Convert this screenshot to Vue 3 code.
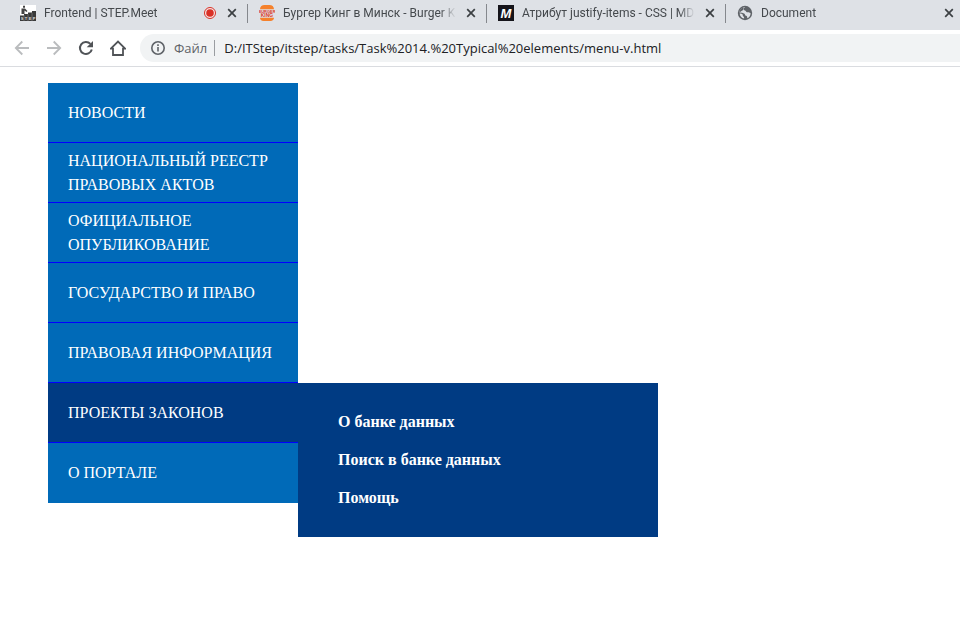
<script setup>
import { ref } from 'vue'

const tabs = [
  { id: 'step', title: 'Frontend | STEP.Meet', recording: true },
  { id: 'burger', title: 'Бургер Кинг в Минск - Burger King' },
  { id: 'mdn', title: 'Атрибут justify-items - CSS | MDN' },
  { id: 'doc', title: 'Document' },
]

const address = ref('D:/ITStep/itstep/tasks/Task%2014.%20Typical%20elements/menu-v.html')

const menu = [
  { title: 'Новости' },
  { title: 'Национальный реестр правовых актов' },
  { title: 'Официальное опубликование' },
  { title: 'Государство и право' },
  { title: 'Правовая информация' },
  { title: 'Проекты законов', children: ['О банке данных', 'Поиск в банке данных', 'Помощь'] },
  { title: 'О портале' },
]

const opened = ref(5)
</script>

<template>
  <div class="window">
    <header class="browser">
      <div class="tabs">
        <div v-for="tab in tabs" :key="tab.id" class="tab">
          <svg v-if="tab.id === 'step'" class="icon" viewBox="0 0 16 16" aria-hidden="true">
            <rect width="16" height="16" fill="#fff" />
            <path d="M0 10.500h4V9h4V7.500h4V6h4v10H0z" fill="#3a3a3a" />
            <path d="M3 .8h2v2H3zM1.500 3.500h3.500L7.500 6l-1 1-2-1.500V9h-3z" fill="#444" />
            <path d="M4 10v6M8 9v7M12 8v8" stroke="#999" stroke-width=".5" />
            <g class="logo-text step-text"><text x="2" y="14.500">S</text><text x="6" y="14.500">T</text><text x="10" y="14.500">E</text><text x="14" y="14.500">P</text></g>
          </svg>
          <svg v-else-if="tab.id === 'burger'" class="icon" viewBox="0 0 16 16" aria-hidden="true">
            <path d="M1 4.200C1 1.500 3 0 5.500 0h5C13 0 15 1.500 15 4.200zM1 12.800h14c0 2-1.300 3.200-3.500 3.200h-7C2.300 16 1 14.800 1 12.800z" fill="#f5812c" />
            <g class="logo-text king-text">
              <text class="king-top" x="8" y="7.900">BURGER</text>
              <text x="8" y="12.300">KING</text>
            </g>
          </svg>
          <svg v-else-if="tab.id === 'mdn'" class="icon" viewBox="0 0 16 16" aria-hidden="true">
            <rect width="16" height="16" fill="#15141a" />
            <text class="logo-text mdn-text" x="8" y="12.500">M</text>
          </svg>
          <svg v-else class="icon" viewBox="0 0 16 16" aria-hidden="true">
            <circle cx="8" cy="8" r="7.200" fill="#5f6368" />
            <path d="M8.200 2.200C7 3 6.500 3.200 6.500 4.300c0 1.200 1.700.7 2.200 1.700.4.900 1.300 1.400 2.300 1.200 1-.2 1.300.8 2.600.7a5.700 5.700 0 0 1-3.400 5.300c.2-1-.1-2.200-1.100-2.400-1.400-.3-.8-1.800-2-2.300C5.600 7.800 4 7.500 2.300 7.600 2.500 4.600 5 2.100 8.200 2.200z" fill="#dee1e6" />
            <path d="M2.600 8.600c1.200 0 2.600.2 3 1 .4.900 0 1.500.8 2 .6.400.8 1.200.7 2C4.500 13.300 2.900 11.200 2.600 8.600z" fill="#dee1e6" />
            <path d="M2.300 7.600C2.500 4.600 4.500 3 6.500 2.600c.5 1-.6 1.700-.6 2.700-.8.300-1.700.9-3.600 2.300z" fill="#5f6368" />
          </svg>
          <span class="title">{{ tab.title }}</span>
          <svg v-if="tab.recording" class="rec" viewBox="0 0 14 14" aria-hidden="true">
            <circle cx="7" cy="7" r="5.500" fill="#f6e6e6" stroke="#d93025" />
            <circle cx="7" cy="7" r="3.800" fill="#d93025" />
          </svg>
          <button class="close" type="button" :aria-label="`Закрыть ${tab.title}`">
            <svg class="icon" viewBox="0 0 16 16"><path d="M4.200 4.200l7.600 7.600M11.800 4.200l-7.600 7.600" stroke="#3c4043" stroke-width="1.700" /></svg>
          </button>
        </div>
      </div>
      <div class="toolbar">
        <button class="nav" type="button" aria-label="Назад">
          <svg class="icon" viewBox="0 0 16 16"><path d="M15 8H2M8.300 1.500 1.800 8l6.500 6.500" fill="none" stroke="#babcbe" stroke-width="1.800" /></svg>
        </button>
        <button class="nav" type="button" aria-label="Вперёд">
          <svg class="icon" viewBox="0 0 16 16"><path d="M1 8h13M7.700 1.500 14.200 8l-6.500 6.500" fill="none" stroke="#babcbe" stroke-width="1.800" /></svg>
        </button>
        <button class="nav" type="button" aria-label="Обновить">
          <svg class="icon" viewBox="0 0 16 16"><path d="M13.800 9.500A6 6 0 1 1 12.400 3.900" fill="none" stroke="#505357" stroke-width="2" /><path d="M15 1v6.300H8.700z" fill="#505357" /></svg>
        </button>
        <button class="nav" type="button" aria-label="Главная">
          <svg class="icon" viewBox="0 0 16 16"><path d="M.8 8.700 8 1.500l7.200 7.200H13v6.300H3V8.700z" fill="none" stroke="#505357" stroke-width="1.800" /></svg>
        </button>
        <div class="omnibox">
          <svg class="icon" viewBox="0 0 16 16" aria-hidden="true">
            <circle cx="8" cy="8" r="6.200" fill="none" stroke="#5f6368" stroke-width="1.600" />
            <path d="M8 7v4.500M8 4.300v1.600" stroke="#5f6368" stroke-width="1.600" />
          </svg>
          <label class="scheme" for="address">Файл</label>
          <input id="address" v-model="address" class="address" type="text" spellcheck="false" />
        </div>
      </div>
    </header>

    <main class="page">
      <nav>
        <ul class="menu">
          <li v-for="(item, i) in menu" :key="item.title" class="item">
            <a href="#" class="link" :class="{ active: opened === i }">{{ item.title }}</a>
            <ul v-if="item.children && opened === i" class="submenu">
              <li v-for="child in item.children" :key="child"><a href="#" class="sublink">{{ child }}</a></li>
            </ul>
          </li>
        </ul>
      </nav>
    </main>
  </div>
</template>

<style>
body {
  background: #fff;
}
</style>

<style scoped>
.window {
  min-height: 100vh;
}
.browser {
  font-family: "Open Sans", "Noto Sans", sans-serif;
  border-bottom: 1px solid #dadce0;
}
.icon {
  display: block;
  flex: none;
  width: 16px;
  height: 16px;
}
.logo-text {
  font-family: "Liberation Sans", sans-serif;
  font-weight: bold;
  text-anchor: middle;
}
.step-text {
  font-size: 4px;
  fill: #ddd;
}
.king-text {
  font-size: 5px;
  fill: #dc3a28;
}
.king-top {
  font-size: 4px;
}
.mdn-text {
  font-size: 13px;
  font-style: italic;
  fill: #fff;
}
button {
  padding: 0;
  border: 0;
  background: none;
}
.tabs {
  display: flex;
  height: 30px;
  padding-left: 8px;
  overflow: hidden;
  background: #dee1e6;
}
.tab {
  position: relative;
  display: flex;
  flex: none;
  align-items: center;
  box-sizing: border-box;
  width: 239px;
  height: 26px;
  padding: 0 7px 0 12px;
  gap: 7px;
}
.tab + .tab::before {
  content: "";
  position: absolute;
  left: 0;
  top: 4px;
  width: 1px;
  height: 19px;
  background: #85888d;
}
.title {
  flex: 1;
  min-width: 0;
  padding-left: 1px;
  overflow: hidden;
  white-space: nowrap;
  font-family: Roboto, sans-serif;
  font-size: 12px;
  line-height: 16px;
  color: #45494d;
  mask-image: linear-gradient(to left, transparent, #000 16px);
}
.rec {
  flex: none;
  width: 14px;
  height: 14px;
}
.toolbar {
  display: flex;
  align-items: center;
  height: 36px;
  padding-left: 14px;
  gap: 16px;
  background: #fff;
}
.omnibox {
  display: flex;
  flex: 1;
  align-items: center;
  height: 28px;
  margin-left: -2px;
  padding-left: 10px;
  border-radius: 14px 0 0 14px;
  background: #f1f3f4;
}
.scheme {
  margin-left: 8px;
  padding-right: 7px;
  border-right: 1px solid #9a9da1;
  font-size: 13px;
  line-height: 16px;
  color: #5f6368;
}
.address {
  flex: 1;
  min-width: 0;
  padding: 0 0 0 9px;
  border: 0;
  outline: 0;
  background: transparent;
  font-family: inherit;
  font-size: 13px;
  line-height: 20px;
  color: #202124;
}
.page {
  padding: 16px 48px;
  font-family: "Liberation Serif", serif;
  font-size: 16px;
}
ul {
  margin: 0;
  padding: 0;
  list-style: none;
}
a {
  color: #fff;
  text-decoration: none;
}
.menu {
  width: 250px;
}
.item {
  position: relative;
}
.link {
  display: flex;
  align-items: center;
  box-sizing: border-box;
  min-height: 60px;
  padding: 0 20px;
  border-bottom: 1px solid #00f;
  background: #006ab8;
  line-height: 24px;
  text-transform: uppercase;
}
.item:last-child .link {
  border-bottom-color: #006ab8;
}
.link.active {
  background: #003b83;
}
.submenu {
  position: absolute;
  top: 0;
  left: 100%;
  box-sizing: border-box;
  width: 360px;
  padding: 20px 40px;
  background: #003b83;
}
.sublink {
  display: block;
  font-weight: bold;
  line-height: 38px;
}
</style>
